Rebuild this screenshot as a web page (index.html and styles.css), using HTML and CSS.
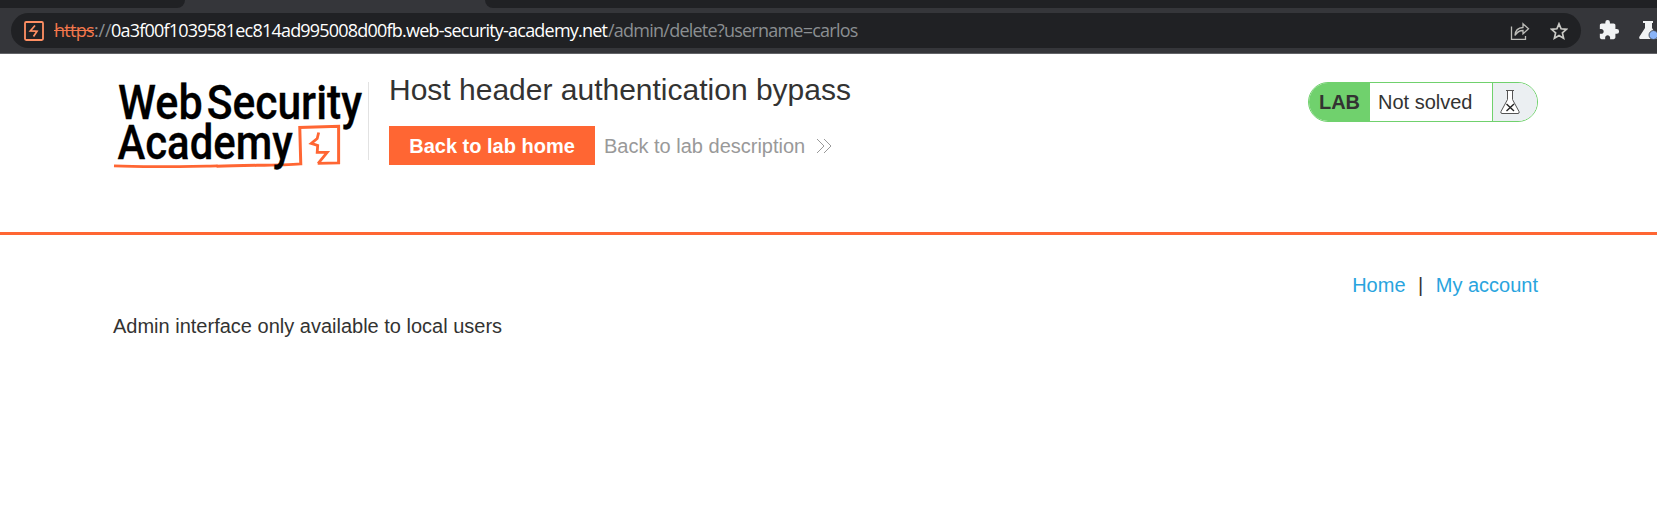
FILE: index.html
```html
<!DOCTYPE html>
<html lang="en">
<head>
<meta charset="utf-8">
<title>Host header authentication bypass</title>
<link rel="stylesheet" href="styles.css">
</head>
<body>
<div class="tabstrip"><div class="tab-left"></div><div class="tab-active"></div><div class="tab-right"></div></div>
<div class="toolbar">
  <div class="omnibox">
    <svg class="site-icon" viewBox="0 0 20 20" width="20" height="20"><rect x="1" y="1" width="18" height="18" rx="1.2" fill="none" stroke="#ff8f63" stroke-width="1.8"/><path d="M11 4.500 6.300 9.900 13 10.200 9.500 15.500" fill="none" stroke="#ff8f63" stroke-width="1.7"/></svg>
    <div class="url"><span class="scheme">https</span><span class="sep">://</span><span class="host">0a3f00f1039581ec814ad995008d00fb.web-security-academy.net</span><span class="path">/admin/delete?username=carlos</span></div>
    <svg class="share" viewBox="0 0 20 20" width="20" height="20" fill="none" stroke="#bdbdb9" stroke-width="1.3"><path d="M1.500 5.500v12.800h14V15M5 14.500C5.300 9.500 8 6.700 13 6.500V2.800l5.500 5-5.500 5V9.500c-3.800 0-6 1.500-8 5z"/></svg>
    <svg class="star" viewBox="0 0 18 18" width="18" height="18"><path d="m9 1.800 2.100 5 5.400.5-4.100 3.600 1.200 5.300L9 13.400l-4.600 2.800 1.200-5.300-4.100-3.600 5.400-.5z" fill="none" stroke="#c9c9c5" stroke-width="1.7"/></svg>
  </div>
  <svg class="puzzle" viewBox="0 0 24 24" width="22" height="22"><path fill="#f1f3f4" d="M20.500 11H19V7c0-1.100-.9-2-2-2h-4V3.500a2.500 2.500 0 0 0-5 0V5H4c-1.100 0-1.990.9-1.990 2v3.800H3.500c1.490 0 2.700 1.210 2.700 2.700s-1.210 2.700-2.700 2.700H2V20c0 1.100.9 2 2 2h3.800v-1.500c0-1.490 1.210-2.700 2.700-2.700s2.700 1.210 2.700 2.700V22H17c1.100 0 2-.9 2-2v-4h1.500a2.500 2.500 0 0 0 0-5z"/></svg>
  <svg class="labs" viewBox="0 0 18 20" width="18" height="20"><path fill="#f1f3f4" d="M4 1h10v2h-1v5l5 8v3H1c-1-.6-1-1.500-.5-2.500L6 8V3H4z"/><circle cx="14.500" cy="15" r="4.500" fill="#8ab4f8" stroke="#35363a" stroke-width=".8"/></svg>
</div>
<header class="lab-header">
  <div class="container">
    <svg class="logo" viewBox="0 0 256 96" width="256" height="96">
      <path d="M1 84C35 85.500 75 84.500 105 84" fill="none" stroke="#ff6633" stroke-width="2.800"/>
      <path d="M104 84.500C135 83 165 84 188.500 82L187.500 45.500 226.500 44.300 226.500 81 205.500 81.500" fill="none" stroke="#ff6633" stroke-width="3"/>
      <path d="M206.500 50.500 205 56.500 199 61.500 205.500 63.500 205 70.500 215 70.500 206 81.500" fill="none" stroke="#ff6633" stroke-width="2.800"/>
      <g class="logo-text">
        <text x="5" y="36.500" textLength="85" lengthAdjust="spacingAndGlyphs">Web</text>
        <text x="94" y="36.500" textLength="156" lengthAdjust="spacingAndGlyphs">Security</text>
        <text x="4.500" y="77.500" textLength="176" lengthAdjust="spacingAndGlyphs">Academy</text>
      </g>
    </svg>
    <div class="title">
      <h2>Host header authentication bypass</h2>
      <div class="actions">
        <a class="button">Back to lab home</a>
        <a class="description">Back to lab description</a>
        <svg viewBox="0 0 16 16" width="16" height="16" fill="none" stroke="#999" stroke-width="1"><path d="M1 1l7 7-7 7M8 1l7 7-7 7"/></svg>
      </div>
    </div>
    <div class="status">
      <span class="lab">LAB</span>
      <p>Not solved</p>
      <span class="flask"><svg viewBox="0 0 20 26" width="20" height="26" fill="none"><path d="M6 1.500h8M7.500 1.500v9L1 22.500Q.3 24.500 2 24.500h16q1.700 0 1-2L12.500 10.500v-9" fill="#fff" stroke="#555" stroke-width="1"/><path d="m6.500 15 7.500 7m0-7-7.500 7" stroke="#222" stroke-width="1.400"/></svg></span>
    </div>
  </div>
</header>
<main>
  <nav><a>Home</a><span>|</span><a>My account</a></nav>
  <p class="message">Admin interface only available to local users</p>
</main>
</body>
</html>
```
FILE: styles.css
```css
* { box-sizing: border-box; }
body { margin: 0; background: #fff; color: #333332; font: 20px/24px "Liberation Sans", Arial, sans-serif; height: 523px; overflow: hidden; }
p, h2 { margin: 0; }
svg { display: block; flex: none; }
.tabstrip { display: flex; height: 8px; background: #35363a; }
.tab-left { width: 185px; background: #202124; border-bottom-right-radius: 9px; }
.tab-active { width: 300px; }
.tab-right { flex: 1; background: #202124; border-bottom-left-radius: 9px; }
.toolbar { display: flex; height: 46px; padding: 5px 0 0 11px; background: #35363a; border-bottom: 1px solid #626367; }
.omnibox { display: flex; align-items: center; width: 1570px; height: 35px; padding: 0 13px; border-radius: 18px; background: #202124; }
.url { display: flex; flex: 1; margin-left: 10px; font: 18px/25px "Open Sans", "Noto Sans", sans-serif; color: #8b8f92; white-space: nowrap; }
.scheme { color: #f2774c; text-decoration: line-through; width: 40px; letter-spacing: -.7px; }
.sep { width: 17px; letter-spacing: -.2px; }
.host { width: 497px; color: #fff; letter-spacing: -.79px; }
.path { letter-spacing: -.76px; }
.share { margin-right: 20px; }
.puzzle { margin: 6px 0 0 17px; }
.labs { margin: 7px 0 0 19px; }
.lab-header { height: 181px; border-bottom: 3px solid #ff6633; }
.container { display: flex; padding: 28px 119px 0 113px; }
.logo { overflow: visible; width: 255px; height: 96px; }
.logo-text { font: 500 48px Roboto, sans-serif; fill: #000; stroke: #000; stroke-width: .3px; }
.title { height: 78px; padding-left: 20px; border-left: 1px solid #e2e2e2; }
h2 { margin-top: -10px; font-size: 30px; font-weight: 400; line-height: 36px; white-space: nowrap; }
.actions { display: flex; align-items: center; margin-top: 18px; color: #999; }
.button { width: 206px; height: 39px; background: #ff6633; color: #fff; font-weight: 700; line-height: 40px; text-align: center; }
.description { margin: 1px 11px 0 9px; white-space: nowrap; }
.status { display: flex; width: 230px; height: 40px; margin-left: auto; border: 1px solid #70d16d; border-radius: 20px; overflow: hidden; line-height: 38px; }
.lab { width: 61px; background: #70d16d; font-weight: 700; text-align: center; }
.status p { width: 122px; padding-left: 8px; }
.flask { flex: 1; padding: 6px 0 0 7px; background: #ebeff2; border-left: 1px solid #70d16d; }
main { padding: 38px 119px 0 113px; }
nav { display: flex; justify-content: flex-end; gap: 12.500px; color: #29a4de; }
nav span { color: #333332; }
.message { margin-top: 17px; }
```
